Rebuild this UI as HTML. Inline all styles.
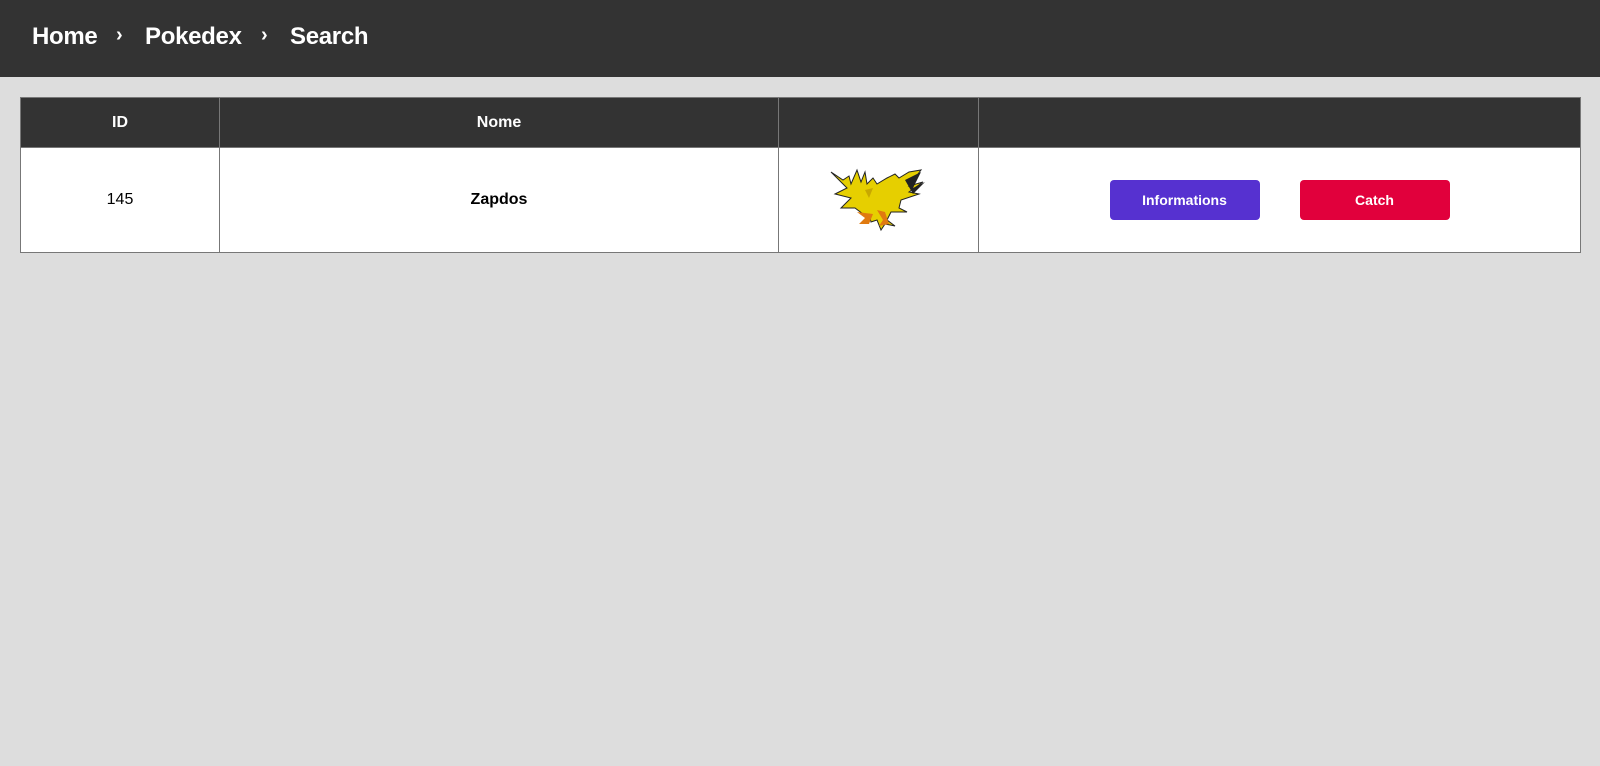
<!DOCTYPE html>
<html><head><style>
body{margin:0;background:#dddddd;font-family:"Liberation Sans",Arial,sans-serif;width:1600px;height:766px;overflow:hidden}
.top{height:77px;background:#333;color:#fff;position:relative}
.top span{position:absolute;top:23px;font-size:24px;font-weight:bold;letter-spacing:-0.3px}
.top .c{font-size:20px;top:24px}
table{position:absolute;left:20px;top:97px;width:1561px;border-collapse:collapse}
th,td{border:1px solid #777;text-align:center;padding:0}
th{background:#333;color:#fff;height:49px;font-size:16px}
td{background:#fff;height:104px;font-size:16px}
.b{display:inline-block;width:150px;height:40px;line-height:40px;border-radius:4px;color:#fff;font-weight:bold;font-size:14px;vertical-align:middle}
</style></head><body>
<div class="top">
<span style="left:32px">Home</span><span class="c" style="left:116px">›</span>
<span style="left:145px">Pokedex</span><span class="c" style="left:261px">›</span>
<span style="left:290px">Search</span>
</div>
<table><tr><th style="width:198px">ID</th><th style="width:558px">Nome</th><th style="width:199px"></th><th></th></tr>
<tr><td>145</td><td style="font-weight:bold">Zapdos</td><td>
<svg width="100" height="64" viewBox="0 0 100 64" style="vertical-align:middle">
<polygon points="2,4 14,12 20,8 22,16 28,2 32,14 36,4 38,16 44,10 48,16 58,10 66,6 70,10 80,4 92,2 80,18 94,14 80,24 90,26 72,32 70,40 78,44 62,44 58,52 66,58 56,56 52,62 48,52 42,54 40,46 34,46 26,40 12,40 22,30 6,26 18,20" fill="#e6cf00" stroke="#222" stroke-width="1"/>
<polygon points="76,12 92,4 84,20 96,14 84,26" fill="#222"/>
<polygon points="28,44 36,50 30,56 40,56 44,46" fill="#e07a10"/>
<polygon points="48,42 54,52 50,58 60,56 56,44" fill="#e07a10"/>
<polygon points="36,22 44,20 40,30" fill="#c8a800"/>
</svg></td>
<td><span class="b" style="background:#5631d0">Informations</span><span style="display:inline-block;width:40px"></span><span class="b" style="background:#e1003c">Catch</span></td></tr></table>
</body></html>
